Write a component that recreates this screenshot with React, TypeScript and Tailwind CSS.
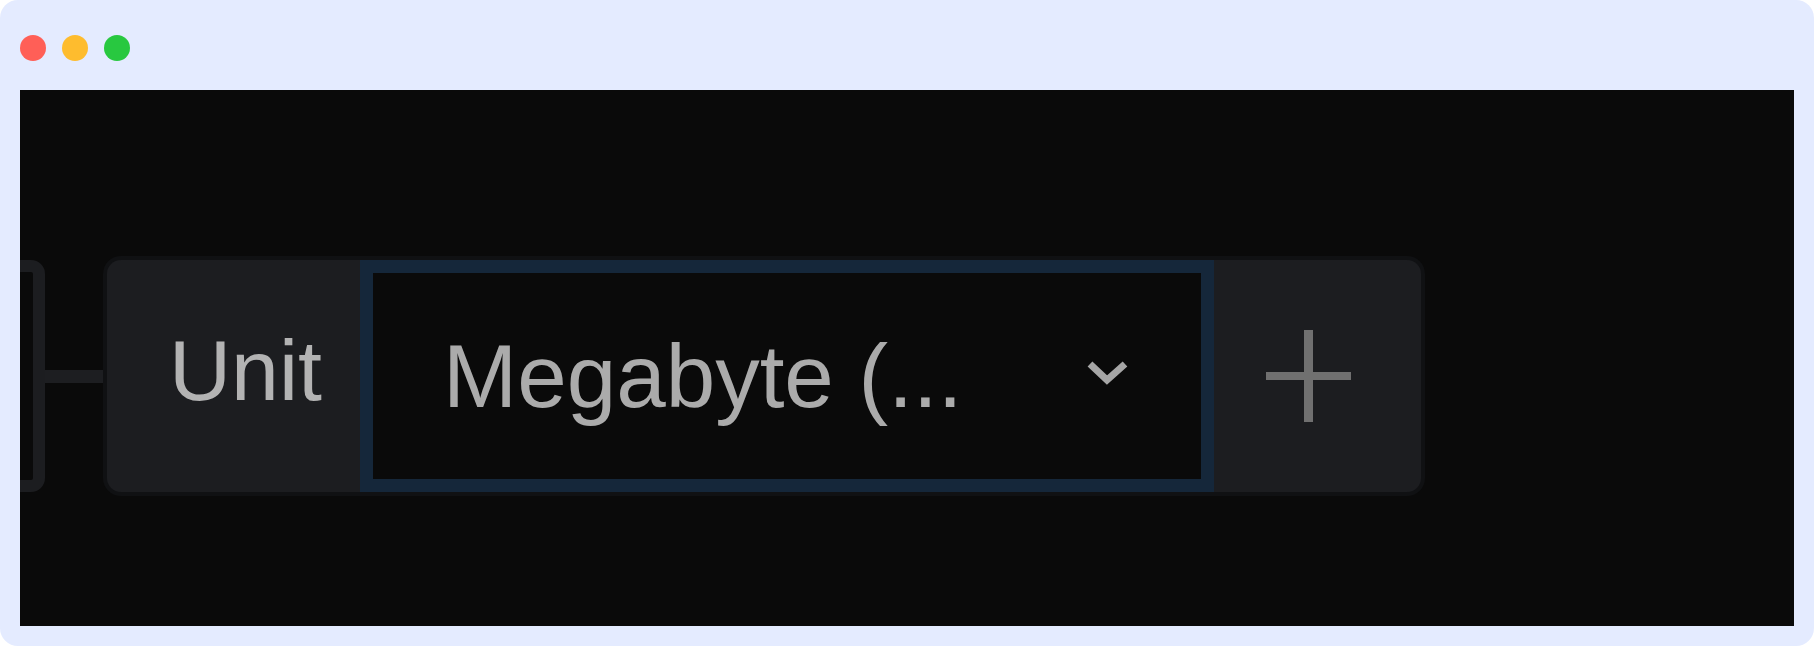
export default function App() {
    return (
        <div className="w-[1814px] h-[646px] bg-[#e4ebff] rounded-[18px] px-[20px] pb-[20px] flex flex-col overflow-hidden">
            <div className="h-[90px] flex items-center gap-[16px] pt-[6px] shrink-0">
                <span className="w-[26px] h-[26px] rounded-full bg-[#ff5f57]" />
                <span className="w-[26px] h-[26px] rounded-full bg-[#febc2e]" />
                <span className="w-[26px] h-[26px] rounded-full bg-[#28c840]" />
            </div>
            <div className="flex-1 bg-[#0a0a0a] overflow-hidden pt-[170px]">
                <div className="flex items-center">
                    <div className="w-[50px] h-[232px] -ml-[25px] border-[12px] border-[#1c1d20] rounded-[14px] bg-[#0a0a0a] shrink-0" />
                    <div className="w-[62px] h-[13px] bg-[#1d1e21] shrink-0" />
                    <div className="w-[1314px] h-[232px] bg-[#1c1d20] rounded-[14px] flex shadow-[0_0_0_4px_#101113] shrink-0"
                        style={{ fontFamily: '"Liberation Sans", Arial, sans-serif' }}>
                        <div className="w-[253px] flex items-center pl-[62px] pb-[12px] text-[86px] text-[#b3b3b3] leading-none">
                            Unit
                        </div>
                        <div className="w-[854px] border-[13px] border-[#15273a] bg-[#0a0a0a] flex items-center justify-between pl-[70px] pr-[72px]">
                            <span className="text-[89px] text-[#ababab] leading-none">Megabyte (...</span>
                            <svg width="43" height="30" viewBox="0 0 43 30" className="mt-[-10px]">
                                <polyline points="4,8 21,24 39,8" fill="none" stroke="#a6a6a6" strokeWidth="7" />
                            </svg>
                        </div>
                        <div className="flex-1 flex items-center justify-center pr-[18px]">
                            <div className="relative w-[85px] h-[92px]">
                                <div className="absolute left-0 right-0 top-[42px] h-[8px] bg-[#707070]" />
                                <div className="absolute top-0 bottom-0 left-[38px] w-[9px] bg-[#707070]" />
                            </div>
                        </div>
                    </div>
                </div>
            </div>
        </div>
    )
}
